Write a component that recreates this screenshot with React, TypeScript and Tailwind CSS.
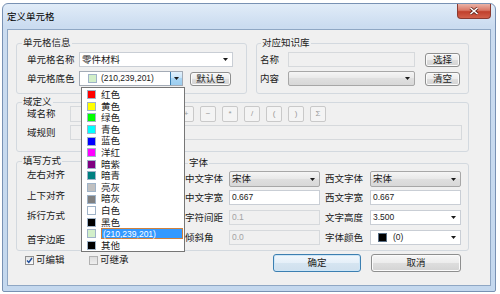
import { type ReactNode } from 'react';

const Arrow = () => (
  <svg width="5" height="3" viewBox="0 0 5 3" className="shrink-0">
    <path d="M0 0H5L2.5 3Z" fill="#1a1a1a" />
  </svg>
);

function Btn({ children, className = '' }: { children: ReactNode; className?: string }) {
  return (
    <div
      className={`flex items-center justify-center rounded-[3px] border border-[#8e8f8f] bg-[linear-gradient(#f6f6f6,#ececec_50%,#dedede_50%,#d3d3d3)] shadow-[inset_0_0_0_1px_#fbfbfb] ${className}`}
    >
      {children}
    </div>
  );
}

function Group({ title, className = '', titleClass = 'ml-[5px]', children }: { title: string; className?: string; titleClass?: string; children: ReactNode }) {
  return (
    <div className={`flex flex-col rounded-[3px] border border-[#d3d9df] ${className}`}>
      <span className={`-mt-[6px] self-start h-[10px] leading-[10px] px-[1px] bg-[#f0f0f0] ${titleClass}`}>{title}</span>
      {children}
    </div>
  );
}

const whiteBox = 'flex items-center bg-white border border-[#c9ced5]';
const grayBox = 'flex items-center bg-[#f0f0f0] border border-[#d6d9dc] text-[#a3a3a3]';
const comboBox = 'flex items-center justify-between rounded-[2px] border border-[#a7a7a7] bg-[linear-gradient(#f5f5f5,#e8e8e8_50%,#dfdfdf_50%,#d8d8d8)] pl-[2px] pr-[4px]';

const colors: [string, string][] = [
  ['红色', '#ff0000'],
  ['黄色', '#ffff00'],
  ['绿色', '#00ff00'],
  ['青色', '#00ffff'],
  ['蓝色', '#0000ff'],
  ['洋红', '#ff00ff'],
  ['暗紫', '#800080'],
  ['暗青', '#008080'],
  ['亮灰', '#c0c0c0'],
  ['暗灰', '#808080'],
  ['白色', '#ffffff'],
  ['黑色', '#000000'],
  ['(210,239,201)', '#d2efc9'],
  ['其他', '#000000'],
];

function ColorList() {
  return (
    <div className="absolute left-[1px] top-[15px] z-10 w-[104px] h-[165px] border border-[#767676] bg-white pt-[1px]">
      {colors.map(([name, c], i) => (
        <div key={name} className="flex items-center h-[11.6px]">
          <span className="ml-[5px] w-[9px] h-[9px] border border-[#9fb3c8] shrink-0" style={{ background: c }} />
          {i === 12 ? (
            <span className="ml-[5px] mr-[1px] flex-1 h-[11px] flex items-center border border-[#d0813b] bg-[#3399ff] text-white text-[8.5px] pl-[1px]">
              {name}
            </span>
          ) : (
            <span className="ml-[5px]">{name}</span>
          )}
        </div>
      ))}
    </div>
  );
}

function OpButton({ children }: { children: ReactNode }) {
  return (
    <div className="w-[16px] h-[16px] flex items-center justify-center rounded-[2px] border border-[#c9c9c9] bg-[#f4f4f4] text-[#9a9a9a] text-[8px]">
      {children}
    </div>
  );
}

function CheckBox({ checked, label, className = '' }: { checked?: boolean; label: string; className?: string }) {
  return (
    <div className={`flex items-center ${className}`}>
      <span
        className={`w-[9px] h-[9px] flex items-center justify-center border ${
          checked ? 'border-[#8f8f8f] bg-[linear-gradient(#e4e4e4,#fbfbfb)]' : 'border-[#b1b1b1] bg-[linear-gradient(#dcdcdc,#efefef)]'
        }`}
      >
        {checked && (
          <svg width="7" height="7" viewBox="0 0 7 7">
            <path d="M1 3.6L2.8 5.5L6 1" fill="none" stroke="#1f4d9b" strokeWidth="1.4" />
          </svg>
        )}
      </span>
      <span className="ml-[2px] leading-[10px]">{label}</span>
    </div>
  );
}

export default function App() {
  return (
    <div className="w-[500px] h-[294px] bg-white pl-[2px] pt-[3px] font-['Liberation_Sans','Noto_Sans_CJK_SC',sans-serif] text-[9.5px] leading-none text-[#1b1b1b]">
      <div className="w-[494px] h-[289px] rounded-t-[6px] rounded-b-[2px] border border-[#7891b3] bg-[linear-gradient(#e1ecf8,#cbdcf0_22px,#c4d8ee)] px-[4px] pb-[5px] flex flex-col">
        <div className="h-[25px] flex justify-between items-start">
          <span className="mt-[8px] h-[10px] leading-[10px] text-black">定义单元格</span>
          <div className="w-[34px] h-[15px] rounded-b-[4px] border border-[#8a3a30] border-t-0 bg-[linear-gradient(#eab3a7,#d97664_45%,#c0402c_55%,#d2604a)] flex items-center justify-center">
            <svg width="10" height="8" viewBox="0 0 10 8">
              <path d="M1.5 1L8.5 7M8.5 1L1.5 7" stroke="#5b2018" strokeWidth="3" />
              <path d="M1.5 1L8.5 7M8.5 1L1.5 7" stroke="#ffffff" strokeWidth="1.6" />
            </svg>
          </div>
        </div>

        <div className="flex-1 border border-[#8fa7c4] bg-[#f0f0f0] pl-[8px] pt-[13px] flex flex-col">
          {/* top groups */}
          <div className="flex gap-[9px]">
            <Group title="单元格信息" className="w-[231px] h-[51px]">
              <div className="mt-[4px] pl-[10px] flex items-center h-[15px]">
                <span className="w-[52px]">单元格名称</span>
                <div className={`${whiteBox} w-[154px] h-[15px] justify-between pl-[2px] pr-[4px]`}>
                  <span>零件材料</span>
                  <Arrow />
                </div>
              </div>
              <div className="mt-[4px] pl-[10px] flex items-center h-[15px]">
                <span className="w-[52px]">单元格底色</span>
                <div className="relative w-[104px] h-[15px] flex items-center bg-white border border-[#a3abb6]">
                  <span className="ml-[8px] w-[9px] h-[9px] border border-[#9fb3c8] bg-[#d2efc9]" />
                  <span className="ml-[4px] text-[8.5px] flex-1">(210,239,201)</span>
                  <span className="w-[12px] h-full flex items-center justify-center border-l border-[#3c7fb1] bg-[linear-gradient(#e3f1fc,#c6e3f8_50%,#a9d5f4_50%,#9ccdef)]">
                    <Arrow />
                  </span>
                  <ColorList />
                </div>
                <Btn className="ml-[7px] w-[41px] h-[14px]">默认色</Btn>
              </div>
            </Group>

            <Group title="对应知识库" titleClass="ml-[4px]" className="w-[213px] h-[51px]">
              <div className="mt-[4px] pl-[3px] flex items-center h-[15px]">
                <span className="w-[28px]">名称</span>
                <div className={`${grayBox} w-[127px] h-[15px]`} />
                <Btn className="ml-[10px] w-[35px] h-[14px]">选择</Btn>
              </div>
              <div className="mt-[4px] pl-[3px] flex items-center h-[15px]">
                <span className="w-[28px]">内容</span>
                <div className={`${comboBox} w-[127px] h-[15px] justify-end`}>
                  <Arrow />
                </div>
                <Btn className="ml-[10px] w-[35px] h-[14px]">清空</Btn>
              </div>
            </Group>
          </div>

          {/* 域定义 */}
          <Group title="域定义" className="mt-[8px] w-[453px] h-[50px]">
            <div className="-mt-[1px] pl-[10px] flex items-center h-[16px]">
              <span className="w-[43px]">域名称</span>
              <div className={`${grayBox} w-[104px] h-[16px]`} />
              <div className="ml-[4px] flex gap-[6px]">
                <OpButton>+</OpButton>
                <OpButton>−</OpButton>
                <OpButton>*</OpButton>
                <OpButton>/</OpButton>
                <OpButton>(</OpButton>
                <OpButton>)</OpButton>
                <OpButton>Σ</OpButton>
              </div>
            </div>
            <div className="mt-[3px] pl-[10px] flex items-center h-[15px]">
              <span className="w-[43px]">域规则</span>
              <div className={`${grayBox} w-[392px] h-[15px]`} />
            </div>
          </Group>

          {/* 填写方式 + 字体 */}
          <div className="flex items-start">
            <Group title="填写方式" className="mt-[9px] w-[160px] h-[90px]">
              <div className="mt-[1px] pl-[10px] flex items-center h-[16px]">
                <span className="w-[53px]">左右对齐</span>
                <div className={`${comboBox} ml-[2px] w-[88px] h-[15px] justify-end`}><Arrow /></div>
              </div>
              <div className="mt-[5px] pl-[10px] flex items-center h-[16px]">
                <span className="w-[53px]">上下对齐</span>
                <div className={`${comboBox} ml-[2px] w-[88px] h-[15px] justify-end`}><Arrow /></div>
              </div>
              <div className="mt-[4px] pl-[10px] flex items-center h-[16px]">
                <span className="w-[53px]">拆行方式</span>
                <div className={`${comboBox} ml-[2px] w-[88px] h-[15px] justify-end`}><Arrow /></div>
              </div>
              <div className="mt-[8px] pl-[10px] flex items-center h-[16px]">
                <span className="w-[53px]">首字边距</span>
                <div className={`${whiteBox} ml-[2px] w-[88px] h-[15px]`} />
              </div>
            </Group>

            <Group title="字体" titleClass="ml-[7px]" className="mt-[11px] ml-[4px] w-[289px] h-[88px]">
              <div className="mt-[3px] pl-[4px] flex items-center h-[16px]">
                <span className="w-[44px]">中文字体</span>
                <div className={`${comboBox} w-[91px] h-[16px]`}><span>宋体</span><Arrow /></div>
                <span className="ml-[5px] w-[45px]">西文字体</span>
                <div className={`${comboBox} w-[91px] h-[16px]`}><span>宋体</span><Arrow /></div>
              </div>
              <div className="mt-[3px] pl-[4px] flex items-center h-[15px]">
                <span className="w-[44px]">中文字宽</span>
                <div className={`${whiteBox} w-[91px] h-[15px] pl-[2px] text-[8.5px]`}>0.667</div>
                <span className="ml-[5px] w-[45px]">西文字宽</span>
                <div className={`${whiteBox} w-[91px] h-[15px] pl-[2px] text-[8.5px]`}>0.667</div>
              </div>
              <div className="mt-[5px] pl-[4px] flex items-center h-[15px]">
                <span className="w-[44px]">字符间距</span>
                <div className={`${grayBox} w-[91px] h-[15px] pl-[2px] text-[8.5px]`}>0.1</div>
                <span className="ml-[5px] w-[45px]">文字高度</span>
                <div className={`${whiteBox} w-[91px] h-[15px] pl-[2px] pr-[4px] justify-between text-[8.5px]`}>
                  <span>3.500</span>
                  <Arrow />
                </div>
              </div>
              <div className="mt-[5px] pl-[4px] flex items-center h-[15px]">
                <span className="w-[44px]">倾斜角</span>
                <div className={`${grayBox} w-[91px] h-[15px] pl-[2px] text-[8.5px]`}>0.0</div>
                <span className="ml-[5px] w-[45px]">字体颜色</span>
                <div className={`${whiteBox} w-[91px] h-[15px] pr-[4px] text-[8.5px]`}>
                  <span className="ml-[7px] w-[9px] h-[9px] bg-black border border-[#5a6f86]" />
                  <span className="ml-[6px] flex-1">(0)</span>
                  <Arrow />
                </div>
              </div>
            </Group>
          </div>

          {/* bottom */}
          <div className="mt-[3px] flex items-start">
            <CheckBox checked label="可编辑" className="ml-[9px] mt-[1px] w-[64px]" />
            <CheckBox label="可继承" className="mt-[1px]" />
            <div className="ml-auto mr-[29px] flex gap-[10px]">
              <div className="w-[88px] h-[18px] flex items-center justify-center rounded-[3px] border border-[#3c7fb1] bg-[linear-gradient(#f1f7fc,#e5eff8_50%,#d6e5f1_50%,#cfe0ee)] shadow-[inset_0_0_0_1px_#cde6f7]">
                确定
              </div>
              <Btn className="w-[90px] h-[18px]">取消</Btn>
            </div>
          </div>
        </div>
      </div>
    </div>
  );
}
